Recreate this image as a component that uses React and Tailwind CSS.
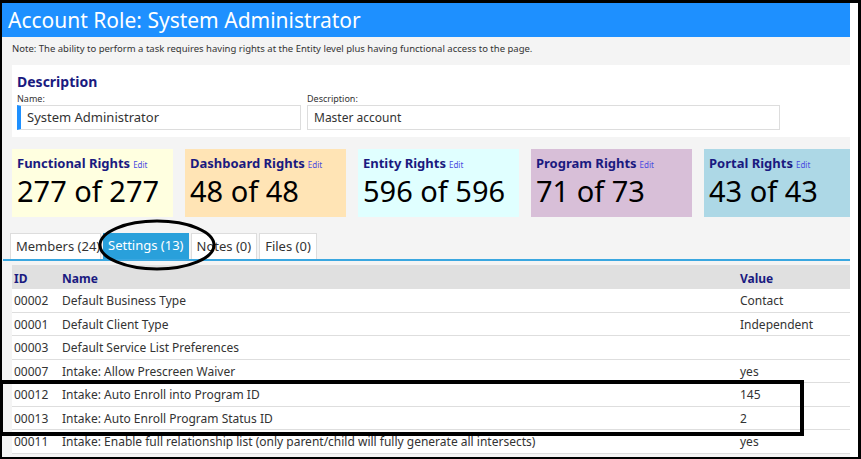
import React from 'react'

const font = { fontFamily: '"Noto Sans", "Open Sans", Arial, sans-serif' }

const rights = [
    { title: 'Functional Rights', value: '277 of 277', bg: 'bg-[#ffffe0]' },
    { title: 'Dashboard Rights', value: '48 of 48', bg: 'bg-[#ffe4b5]' },
    { title: 'Entity Rights', value: '596 of 596', bg: 'bg-[#e0ffff]' },
    { title: 'Program Rights', value: '71 of 73', bg: 'bg-[#d8bfd8]' },
    { title: 'Portal Rights', value: '43 of 43', bg: 'bg-[#add8e6]' },
]

const settings = [
    { id: '00002', name: 'Default Business Type', value: 'Contact' },
    { id: '00001', name: 'Default Client Type', value: 'Independent' },
    { id: '00003', name: 'Default Service List Preferences', value: '' },
    { id: '00007', name: 'Intake: Allow Prescreen Waiver', value: 'yes' },
    { id: '00012', name: 'Intake: Auto Enroll into Program ID', value: '145' },
    { id: '00013', name: 'Intake: Auto Enroll Program Status ID', value: '2' },
    { id: '00011', name: 'Intake: Enable full relationship list (only parent/child will fully generate all intersects)', value: 'yes' },
]

const tabs = [
    { label: 'Members (24)', cls: 'w-[91px] bg-white text-[#333] border border-[#ddd] border-b-0' },
    { label: 'Settings (13)', cls: 'bg-[#29a0db] text-white' },
    { label: 'Notes (0)', cls: 'bg-white text-[#333] border border-[#ddd] border-b-0' },
    { label: 'Files (0)', cls: 'bg-white text-[#333] border border-[#ddd] border-b-0' },
]

const App = () => {
    return (
        <div className="w-[861px] h-[459px] bg-black pt-[3px] pl-[2px] pr-[3px] pb-[2px] overflow-hidden" style={font}>
            <div className="relative h-full bg-white pr-[8px] overflow-hidden">
                <div className="h-full bg-[#f4f4f4] overflow-hidden">
                    {/* header */}
                    <div className="h-[34px] bg-[#1e90ff] px-[6px] flex items-center">
                        <h1 className="text-white text-[21px] leading-none">Account Role: System Administrator</h1>
                    </div>
                    <div className="h-[28px] flex items-center px-[10px] pb-[4px] text-[9.5px] text-[#333]">
                        Note: The ability to perform a task requires having rights at the Entity level plus having functional access to the page.
                    </div>

                    {/* description */}
                    <div className="ml-[10px] bg-white h-[72px] px-[5px] pt-[8px]">
                        <div className="text-[14px] font-bold text-[#1a1a80] leading-[18px]">Description</div>
                        <div className="flex gap-[6px] mt-[1px]">
                            <div className="w-[284px]">
                                <div className="text-[9px] text-[#333] leading-[13px]">Name:</div>
                                <div className="h-[25px] border border-[#ddd] border-l-[4px] border-l-[#1e90ff] flex items-center px-[6px] text-[13px] text-[#333]">
                                    System Administrator
                                </div>
                            </div>
                            <div className="w-[473px]">
                                <div className="text-[9px] text-[#333] leading-[13px]">Description:</div>
                                <div className="h-[25px] border border-[#ddd] flex items-center px-[6px] text-[12px] text-[#333]">
                                    Master account
                                </div>
                            </div>
                        </div>
                    </div>

                    {/* rights cards */}
                    <div className="flex gap-[12px] ml-[10px] mt-[12px] w-[900px]">
                        {rights.map((r) => (
                            <div key={r.title} className={`${r.bg} w-[161px] h-[68px] px-[5px] pt-[5px] shrink-0`}>
                                <div className="flex items-baseline gap-[3px]">
                                    <span className="text-[13px] font-bold text-[#1a1a80]">{r.title}</span>
                                    <span className="text-[8px] text-[#4a4ae0]">Edit</span>
                                </div>
                                <div className="text-[29px] leading-[34px] text-black">{r.value}</div>
                            </div>
                        ))}
                    </div>

                    {/* tabs */}
                    <div className="mt-[16px] ml-[1px] flex items-end border-b-2 border-[#3aa7e0] h-[28px]">
                        <div className="flex gap-[2px] ml-[7px]">
                            {tabs.map((t) => (
                                <div
                                    key={t.label}
                                    className={`h-[26px] px-[5px] flex items-center text-[13px] whitespace-nowrap overflow-hidden ${t.cls}`}
                                >
                                    {t.label}
                                </div>
                            ))}
                        </div>
                    </div>

                    {/* settings table */}
                    <div className="ml-[10px] mt-[4px] text-[12px]">
                        <div className="grid grid-cols-[50px_1fr_110px] h-[24px] pt-[3px] items-center bg-[#e0e0e0] font-bold text-[#1a1a80]">
                            <div className="pl-[2px]">ID</div>
                            <div>Name</div>
                            <div>Value</div>
                        </div>
                        {settings.map((s) => (
                            <div key={s.id} className="grid grid-cols-[50px_1fr_110px] h-[23.5px] pt-[2px] items-center bg-white border-b border-[#dedede] text-[#333]">
                                <div className="pl-[2px]">{s.id}</div>
                                <div className="whitespace-nowrap">{s.name}</div>
                                <div>{s.value}</div>
                            </div>
                        ))}
                    </div>
                </div>

                {/* annotation marks */}
                <svg className="absolute left-[-2px] top-[-3px]" width="861" height="459">
                    <ellipse cx="157" cy="245" rx="57" ry="24" fill="none" stroke="#000" strokeWidth="3" />
                    <rect x="1" y="382" width="801" height="52" fill="none" stroke="#000" strokeWidth="4" />
                </svg>
            </div>
        </div>
    )
}

export default App
